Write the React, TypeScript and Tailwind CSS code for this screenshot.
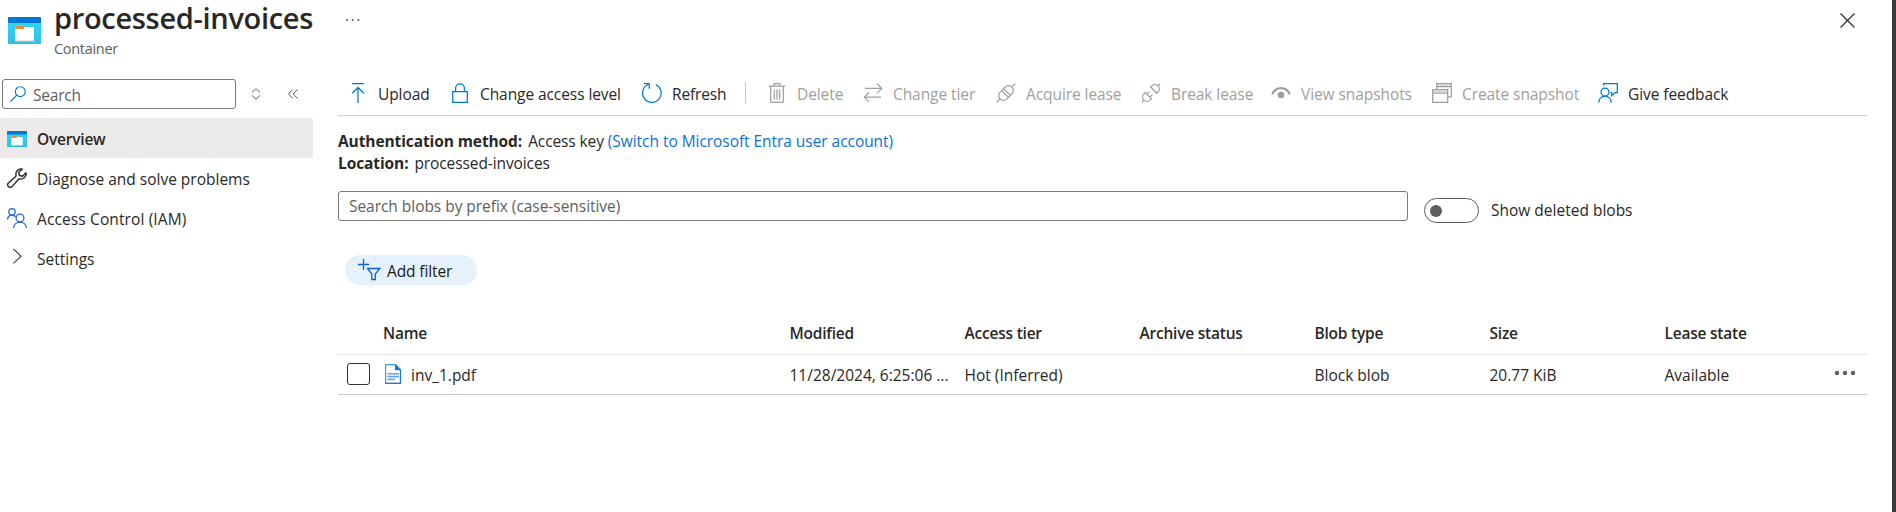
import type { ReactNode } from "react";

function ContainerIcon({ className }: { className: string }) {
  return (
    <svg viewBox="0 0 33 27" preserveAspectRatio="none" className={className}>
      <defs>
        <linearGradient id="containerBody" x1="0" y1="0" x2="0" y2="1">
          <stop offset="0" stopColor="#32d4f5" />
          <stop offset="1" stopColor="#31bde3" />
        </linearGradient>
      </defs>
      <path d="M0 5h33v21a1 1 0 0 1-1 1H1a1 1 0 0 1-1-1z" fill="url(#containerBody)" />
      <path d="M1 0h31a1 1 0 0 1 1 1v5H0V1a1 1 0 0 1 1-1z" fill="#0078d4" />
      <path d="M7.5 8.5h8l1.2 1.5H26v14H7z" fill="#fff" />
      <path d="M7 24h19.5" stroke="#d8cfb8" strokeWidth="1" />
      <path d="M8 8.3h7.5a.7.7 0 0 1 .7.7v2a1 1 0 0 1-1 1H7.2V9a.8.8 0 0 1 .8-.7z" fill="#f08d34" />
    </svg>
  );
}

function Glyph({ children, className = "h-5 w-5 text-[#0078d4]" }: { children: ReactNode; className?: string }) {
  return (
    <svg viewBox="0 0 20 20" fill="none" stroke="currentColor" strokeWidth="1.25" className={`${className} shrink-0`}>
      {children}
    </svg>
  );
}

const GRAY = "h-5 w-5 text-[#a19f9d]";

const upload = (
  <Glyph>
    <path d="M4 .7h12M10 20V5M4.2 10.3 10 4.5l5.8 5.8" />
  </Glyph>
);
const lock = (
  <Glyph>
    <path d="M2.7 8.7h14.6v10.6H2.7zM5.6 8.7V5.3a4.4 4.4 0 0 1 8.8 0v3.4" />
  </Glyph>
);
const refresh = (
  <Glyph>
    <path d="M6.2 1.5A9.3 9.3 0 1 0 13.8 1.6M2 .7h5.2v5" />
  </Glyph>
);
const trash = (
  <Glyph className={GRAY}>
    <path d="M2 3.2h16M7 3V.7h6V3M3.7 3.4v14.8a1.2 1.2 0 0 0 1.2 1.2h10.2a1.2 1.2 0 0 0 1.2-1.2V3.4M7.3 6.4v10M10 6.4v10M12.7 6.4v10" />
  </Glyph>
);
const swap = (
  <Glyph className={GRAY}>
    <path d="M2 5.4h16.5M14 .7l4.8 4.7L14 10.1M18 14.2H1.5M6 9.5l-4.7 4.7L6 18.9" />
  </Glyph>
);
const plug = (
  <Glyph className={GRAY}>
    <g transform="rotate(-45 10 10)">
      <path d="M-3 10h5M18 10h5M8.600 5.200v9.600H6.500a4.800 4.800 0 0 1 0-9.600zM11.400 5.200v9.600h2.100a4.800 4.800 0 0 0 0-9.600zM8.600 5.200h2.800M8.600 14.800h2.800" />
    </g>
  </Glyph>
);
const unplug = (
  <Glyph className={GRAY}>
    <g transform="rotate(-45 10 10)">
      <path d="M-3 10h3M20 10h3M6.300 5.600v8.800H4.400a4.400 4.400 0 0 1 0-8.800zM14 5.600v8.800h1.600a4.400 4.400 0 0 0 0-8.800zM6.300 7.900h3.500M6.300 12.100h3.500" />
    </g>
  </Glyph>
);
const eye = (
  <Glyph className={GRAY}>
    <path d="M1.2 11.5C2.6 7.6 6 5.2 10 5.2s7.4 2.4 8.8 6.3" strokeWidth="2.2" />
    <circle cx="10" cy="12" r="3.3" fill="currentColor" stroke="none" />
  </Glyph>
);
const snapshot = (
  <Glyph className={GRAY}>
    <path d="M.7 6.7h15v12.6h-15zM.7 10.2h15M4.7 6.5V.7h14.6v13.2h-3.4M4.7 3.5h14.6" />
    <path d="M.7 8.3h15M4.7 2h14.6" strokeOpacity=".5" />
  </Glyph>
);
const feedback = (
  <Glyph>
    <circle cx="7" cy="9" r="4" />
    <path d="M.7 19.7C.9 15.8 3.5 13 7 13s6.1 2.8 6.3 6.7M5.7 2.8V.7h13.6v9H17l-3.3 3v-3h-1.2" />
  </Glyph>
);

type Tool = { label: string; icon: ReactNode; width: string; color: string };

const active = "text-[#292827]";
const disabled = "text-[#a19f9d]";

const tools: Tool[] = [
  { label: "Upload", icon: upload, width: "w-[102px]", color: active },
  { label: "Change access level", icon: lock, width: "w-[192px]", color: active },
  { label: "Refresh", icon: refresh, width: "w-[103px] tracking-[-0.15px]", color: active },
];
const blobTools: Tool[] = [
  { label: "Delete", icon: trash, width: "w-[96px]", color: disabled },
  { label: "Change tier", icon: swap, width: "w-[133px]", color: disabled },
  { label: "Acquire lease", icon: plug, width: "w-[145px]", color: disabled },
  { label: "Break lease", icon: unplug, width: "w-[130px]", color: disabled },
  { label: "View snapshots", icon: eye, width: "w-[161px]", color: disabled },
  { label: "Create snapshot", icon: snapshot, width: "w-[166px]", color: disabled },
  { label: "Give feedback", icon: feedback, width: "w-[140px]", color: active },
];

function ToolButton({ tool }: { tool: Tool }) {
  return (
    <button className={`flex h-5 shrink-0 items-center gap-2.5 tracking-[-0.08px] ${tool.width} ${tool.color}`}>
      {tool.icon}
      <span className="pt-0.5">{tool.label}</span>
    </button>
  );
}

function NavItem({ icon, children, className = "" }: { icon: ReactNode; children: string; className?: string }) {
  return (
    <a className={`flex h-10 items-center pl-[7px] ${className}`}>
      <span className="flex w-[30px]">{icon}</span>
      <span className="pt-0.5">{children}</span>
    </a>
  );
}

const columns = [
  { head: "Modified", cell: "11/28/2024, 6:25:06 ..." },
  { head: "Access tier", cell: "Hot (Inferred)" },
  { head: "Archive status", cell: "" },
  { head: "Blob type", cell: "Block blob" },
  { head: "Size", cell: "20.77 KiB" },
  { head: "Lease state", cell: "Available" },
];

export default function App() {
  return (
    <div className="flex h-[512px] w-[1896px] overflow-hidden whitespace-nowrap border-r-4 border-[#383838] bg-white font-['Open_Sans','Noto_Sans',sans-serif] text-[15.5px] leading-5 text-[#292827]">
      <aside className="flex w-[313px] shrink-0 flex-col">
        <header className="flex h-[79px] pl-2">
          <ContainerIcon className="mt-[17px] h-[27px] w-[33px] shrink-0" />
          <div className="pl-[13px]">
            <h1 className="h-[38px] text-[29px] font-semibold leading-[36px] tracking-[-0.32px]">processed-invoices</h1>
            <p className="text-[14.5px] leading-[22px] tracking-[-0.3px] text-[#605e5c]">Container</p>
          </div>
        </header>
        <div className="flex h-[30px] items-center pl-0.5">
          <div className="flex h-[30px] w-[234px] items-center rounded-[3px] border border-[#7a7876] pl-[7px]">
            <svg viewBox="0 0 16 16" fill="none" stroke="#0078d4" strokeWidth="1.1" className="h-4 w-4">
              <circle cx="10.3" cy="5.7" r="4.9" />
              <path d="M6.8 9.2.5 15.5" />
            </svg>
            <span className="pl-[7px] pt-px tracking-[-0.2px] text-[#605e5c]">Search</span>
          </div>
          <svg viewBox="0 0 10 12" fill="none" stroke="#605e5c" strokeWidth="1" className="ml-[15px] h-3 w-2.5">
            <path d="M1 4.5 5 .8l4 3.7M1 7.5l4 3.7 4-3.7" />
          </svg>
          <svg viewBox="0 0 10 10" fill="none" stroke="#605e5c" strokeWidth="1" className="ml-[27px] h-2.5 w-2.5">
            <path d="M4.8.5.5 5l4.3 4.5M9.5.5 5.2 5l4.3 4.5" />
          </svg>
        </div>
        <nav className="flex flex-col pt-[9px]">
          <NavItem
            className="bg-[#edebe9] font-semibold tracking-[-0.22px]"
            icon={<ContainerIcon className="mt-0.5 h-4 w-5" />}
          >
            Overview
          </NavItem>
          <NavItem
            icon={
              <Glyph className="h-5 w-5 text-[#292827]">
                <path d="m15.2 1-3.5 3.5.8 3 3 .8 3.5-3.5a5.3 5.3 0 0 1-7 6L5 18.6a2.5 2.5 0 0 1-3.6-3.6L9.200 8a5.300 5.300 0 0 1 6-7z" strokeWidth="1.4" strokeLinejoin="round" />
              </Glyph>
            }
          >
            Diagnose and solve problems
          </NavItem>
          <NavItem
            className="tracking-[0.12px]"
            icon={
              <Glyph className="h-5 w-5 text-[#1b64e0]">
                <circle cx="5" cy="3.9" r="3.2" />
                <circle cx="13" cy="10" r="3.9" />
                <path d="M.6 11.5C.7 9 2.5 7.1 5 7.1c1.600 0 2.900.7 3.700 1.900M6.600 20c.3-3.500 2.900-6 6.400-6s6.100 2.500 6.400 6" />
              </Glyph>
            }
          >
            Access Control (IAM)
          </NavItem>
          <NavItem
            icon={
              <Glyph className="-mt-1 h-5 w-5 text-[#4f4d4b]">
                <path d="m6.500 3 7.500 7.200-7.500 7.200" />
              </Glyph>
            }
          >
            Settings
          </NavItem>
        </nav>
      </aside>

      <main className="flex w-[1554px] flex-col pl-[25px]">
        <div className="flex h-[83px] justify-between pl-2 pr-[12px]">
          <svg viewBox="0 0 14 4" className="mt-[18px] h-1 w-3.5" fill="#484644">
            <circle cx="1" cy="2" r=".9" />
            <circle cx="6.7" cy="2" r=".9" />
            <circle cx="12.4" cy="2" r=".9" />
          </svg>
          <svg viewBox="0 0 15 15" className="mt-[13px] h-[15px] w-[15px]" fill="none" stroke="#323130" strokeWidth="1.3">
            <path d="m.5.5 14 14M14.500.5l-14 14" />
          </svg>
        </div>
        <div className="flex h-[33px] border-b border-[#d0d0d0] pl-2.5">
          {tools.map((t) => (
            <ToolButton key={t.label} tool={t} />
          ))}
          <div className="-mt-px mr-[21px] h-[21px] w-px bg-[#c8c6c4]" />
          {blobTools.map((t) => (
            <ToolButton key={t.label} tool={t} />
          ))}
        </div>

        <div className="flex flex-col pt-[14px] leading-[22px] tracking-[-0.1px]">
          <div className="flex gap-[6px]">
            <b>Authentication method:</b>
            <span>
              Access key <a className="tracking-[-0.05px] text-[#1070cf]">(Switch to Microsoft Entra user account)</a>
            </span>
          </div>
          <div className="flex gap-[6px]">
            <b>Location:</b>
            <span>processed-invoices</span>
          </div>
        </div>

        <div className="mt-[17px] flex">
          <div className="flex h-[30px] w-[1070px] items-center rounded-[3px] border border-[#7a7876] pl-2.5 text-[#605e5c]">
            <span className="tracking-[-0.04px]">Search blobs by prefix (case-sensitive)</span>
          </div>
          <div className="ml-4 mt-[7px] flex h-[25px] w-[55px] items-center rounded-full border border-[#605e5c] pl-[5px]">
            <div className="h-3 w-3 rounded-full bg-[#605e5c]" />
          </div>
          <span className="ml-3 mt-[9px]">Show deleted blobs</span>
        </div>

        <button className="ml-[7px] mt-[32px] flex h-[30px] w-[132px] items-center rounded-full bg-[#e5f1fb] pl-[13px] text-[#1b1a19]">
          <svg viewBox="0 0 23 22" className="h-[22px] w-[23px]" fill="none" stroke="#0f5fdc" strokeWidth="1.3">
            <path d="M5.5 0v11M0 5.5h11M9.5 9.5h12.3l-4.5 5.5v5.5h-3.500V15z" />
          </svg>
          <span className="pl-[6px] pt-0.5 tracking-[-0.12px]">Add filter</span>
        </button>

        <div className="mt-[29px] flex h-[41px] border-b border-[#e8e8e8] pl-[45px] pt-[9px] font-semibold tracking-[-0.22px]">
          <span className="w-[406.500px]">Name</span>
          {columns.map((c) => (
            <span key={c.head} className="w-[175px]">{c.head}</span>
          ))}
        </div>
        <div className="flex h-10 border-b border-[#c8c8c8] pl-[9px]">
          <div className="mt-2 h-[22px] w-[23px] rounded-[3px] border border-[#323130]" />
          <svg viewBox="0 0 16 20" className="ml-[15px] mt-[9px] h-5 w-4">
            <path d="M.6.6h9.800l5 5V19.400H.6z" fill="#fff" stroke="#3f96ea" strokeWidth="1.2" />
            <path d="M10 0l6 6.2h-6z" fill="#0f78d4" />
            <path d="M0 19.3h16M15.5 6v14" stroke="#0f78d4" strokeWidth="1" />
            <path d="M2.5 9.7h11.500M2.5 12.5h11.500M2.5 15.3h7.500" stroke="#5ea0ef" strokeWidth="1.5" />
          </svg>
          <span className="ml-2.5 mt-[10px] w-[378.500px]">inv_1.pdf</span>
          {columns.map((c) => (
            <span key={c.head} className="mt-[10px] w-[175px] shrink-0">{c.cell}</span>
          ))}
          <svg viewBox="0 0 22 6" className="-ml-[5.500px] mt-[15px] h-1.5 w-[22px] shrink-0" fill="#605e5c">
            <circle cx="3" cy="3" r="2.2" />
            <circle cx="11" cy="3" r="2.2" />
            <circle cx="19" cy="3" r="2.2" />
          </svg>
        </div>
      </main>
    </div>
  );
}
